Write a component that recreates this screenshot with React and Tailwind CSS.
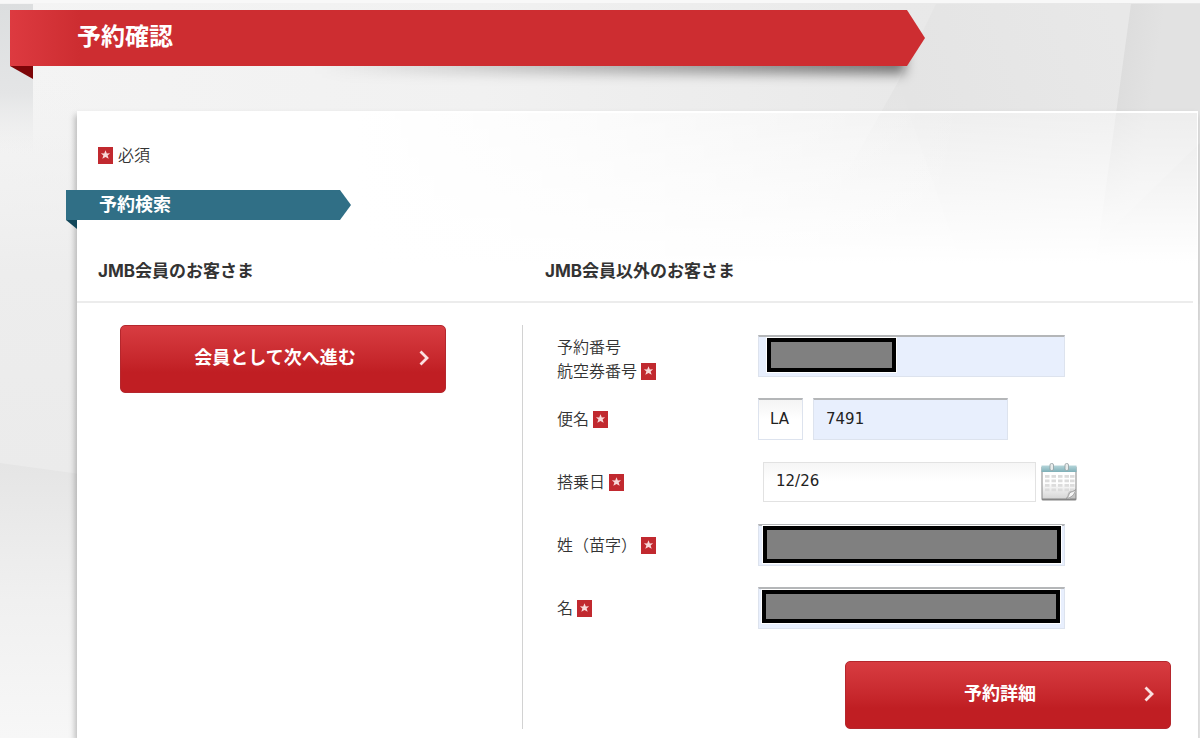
/**
 * App.jsx — Booking lookup page
 * Sections: Title ribbon, Search panel (member / non-member)
 */

const FONT = { fontFamily: "'Noto Sans','Noto Sans CJK JP',sans-serif" };

const INPUT =
  "block h-[42px] border border-[#dde3ee] border-t-2 border-t-[#b4b6b8] px-3 pb-[2px] font-['DejaVu_Sans',sans-serif] text-[15px] text-[#222] outline-none";

/* ── Small pieces ─────────────────────────────────────── */

function RequiredMark() {
  return (
    <svg role="img" aria-label="必須" viewBox="0 0 15 17" className="inline-block w-[15px] h-[17px] shrink-0">
      <rect width="15" height="17" fill="#c1292f" />
      <path
        d="M7.5 3.300l1.300 3.100 3.300-.1-2.500 2.200 1.100 3.200-3.200-1.700-3.200 1.700 1.100-3.200-2.500-2.200 3.300.1z"
        fill="#f8d9d9"
      />
    </svg>
  );
}

function RedButton({ children, type = 'button' }) {
  return (
    <button
      type={type}
      className="relative w-[326px] h-[68px] rounded-[5px] border border-[#b5272d] bg-linear-to-b from-[#d83c41] via-[#c92a2f] via-45% to-[#c01e23] to-70% text-white text-lg font-bold pr-4 pb-1 cursor-pointer"
    >
      {children}
      <svg viewBox="0 0 10 16" className="absolute right-4 top-6 w-[10px] h-4" fill="none" aria-hidden="true">
        <path d="M1.500 1.500L8 8l-6.500 6.500" stroke="#fbe0e0" strokeWidth="2.800" />
      </svg>
    </button>
  );
}

function Row({ id, label, top, children }) {
  return (
    <div className={`flex h-[42px] ${top ? 'items-start' : 'items-center'}`}>
      <label htmlFor={id} className="w-[201px] shrink-0 text-base leading-6 font-[350] text-[#333]">
        {label}
      </label>
      {children}
    </div>
  );
}

/* Field whose value is covered by a grey block */
function MaskedInput({ id, mask }) {
  return (
    <div className="relative w-[307px]">
      <input id={id} type="text" className={`${INPUT} w-full bg-[#e8effd]`} />
      <span className={`absolute bg-[#808080] border-4 border-black ring-1 ring-white ${mask}`} />
    </div>
  );
}

function CalendarIcon() {
  return (
    <svg viewBox="0 0 36 38" className="w-9 h-[38px]" aria-hidden="true">
      <defs>
        <linearGradient id="calTop" x1="0" y1="0" x2="0" y2="1">
          <stop offset="0" stopColor="#b5d5da" />
          <stop offset="1" stopColor="#7fb0b8" />
        </linearGradient>
        <linearGradient id="calPage" x1="0" y1="0" x2="0" y2="1">
          <stop offset="0.400" stopColor="#fff" />
          <stop offset="1" stopColor="#d6d6d6" />
        </linearGradient>
      </defs>
      <rect x="0.500" y="3" width="35" height="34.500" rx="1.500" fill="#858585" />
      <path d="M1.500 9h33v21l-6 5.500H1.500z" fill="url(#calPage)" />
      <rect x="0.500" y="2.500" width="35" height="6.500" fill="url(#calTop)" />
      {[12, 16.5, 21, 25.5].map(y =>
        [4, 10.5, 17, 23.5, 29].map(x => (
          <rect key={`${x}-${y}`} x={x} y={y} width="4.500" height="2.800" fill="#dcdcdc" />
        )),
      )}
      <path d="M25 35.500c2-2 1-5 3-7 2-1 4 0 6.500-2V35.500z" fill="#c4c4c4" />
      <path d="M25 35.500c3-1 2.500-4.500 4-6 1.500-.8 3.500-.5 5.500-3-.5 5-4.500 8.500-9.500 9z" fill="#f6f6f6" stroke="#8c8c8c" strokeWidth="0.700" />
      {[9, 24].map(x => (
        <rect key={x} x={x} y="0.500" width="3.500" height="7" rx="1.500" fill="#e9ecec" stroke="#8f9da0" strokeWidth="0.800" />
      ))}
    </svg>
  );
}

/* Folded grey paper behind the whole page */
function Backdrop() {
  return (
    <svg
      className="absolute inset-0 w-full h-full"
      viewBox="0 0 1200 738"
      preserveAspectRatio="xMinYMin slice"
      aria-hidden="true"
    >
      <defs>
        <linearGradient id="bgTop" x1="0" y1="0" x2="1" y2="0">
          <stop offset="0" stopColor="#f4f4f4" />
          <stop offset="0.400" stopColor="#f1f1f1" />
          <stop offset="0.750" stopColor="#e9e9e9" />
          <stop offset="1" stopColor="#e7e7e7" />
        </linearGradient>
        <linearGradient id="bgLeft" x1="0" y1="0" x2="0" y2="1">
          <stop offset="0" stopColor="#f1f1f1" stopOpacity="0" />
          <stop offset="0.500" stopColor="#ededed" />
          <stop offset="1" stopColor="#ebebeb" />
        </linearGradient>
        <linearGradient id="bgLow" x1="0" y1="0" x2="0" y2="1">
          <stop offset="0" stopColor="#e5e5e5" />
          <stop offset="0.500" stopColor="#f0f0f0" />
          <stop offset="1" stopColor="#f7f7f7" />
        </linearGradient>
        <linearGradient id="strip" x1="0" y1="0" x2="0" y2="1">
          <stop offset="0" stopColor="#dcdedf" />
          <stop offset="0.600" stopColor="#e4e5e6" />
          <stop offset="1" stopColor="#ededed" stopOpacity="0" />
        </linearGradient>
        <linearGradient id="foldShade" gradientUnits="userSpaceOnUse" x1="1110" y1="100" x2="1150" y2="106">
          <stop offset="0" stopColor="#dcdcdc" />
          <stop offset="1" stopColor="#e2e2e2" />
        </linearGradient>
        <linearGradient id="facet" x1="0" y1="0" x2="0" y2="1">
          <stop offset="0" stopColor="#dedede" />
          <stop offset="1" stopColor="#e8e8e8" stopOpacity="0" />
        </linearGradient>
        <linearGradient id="plane" gradientUnits="userSpaceOnUse" x1="900" y1="70" x2="1110" y2="0">
          <stop offset="0" stopColor="#e4e4e4" />
          <stop offset="1" stopColor="#e8e8e8" />
        </linearGradient>
      </defs>
      <rect width="1200" height="738" fill="url(#bgTop)" />
      <rect y="70" width="80" height="405" fill="url(#bgLeft)" />
      <path d="M0 463L80 474V738H0z" fill="url(#bgLow)" />
      <rect y="4" width="33" height="150" fill="url(#strip)" />
      <path d="M936 4L898 82 960 260H1100L1131 4z" fill="url(#plane)" />
      <path d="M898 82L840 185 800 260H960z" fill="url(#facet)" opacity="0.500" />
      <path d="M1131 4h69v300H1090z" fill="url(#foldShade)" />
      <path d="M1200 143L1100 240v80h100z" fill="#d8d8d8" opacity="0.500" />
      <rect width="1200" height="3" fill="#f8f8f8" />
    </svg>
  );
}

export default function App() {
  return (
    <div className="relative isolate min-h-screen overflow-hidden bg-[#f1f1f1] text-[#222]" style={FONT}>
      <Backdrop />

      <div className="relative flex min-h-screen flex-col">
        {/* ── TITLE RIBBON ─────────────────────────────── */}
        <header className="pt-[10px] pl-[10px] h-[111px] shrink-0">
          <div className="relative w-[915px] max-w-full">
            {/* Shadow is strongest under the pointed end */}
            <div className="absolute left-1/3 right-5 top-5 h-11 bg-linear-to-r from-transparent to-black/50 blur-[6px]" />
            <div className="relative flex h-14 items-center bg-linear-to-r from-[#dd3a40] to-[#cd2d31] to-[70px] pl-[67px] pb-1 [clip-path:polygon(0_0,calc(100%-18px)_0,100%_50%,calc(100%-18px)_100%,0_100%)]">
              <h1 className="text-2xl font-bold text-white">予約確認</h1>
            </div>
            <div className="w-[23px] h-[13px] bg-[#7d0508] [clip-path:polygon(0_0,100%_0,100%_100%)]" />
          </div>
        </header>

        {/* ── SEARCH PANEL ─────────────────────────────── */}
        <main className="relative grow ml-[77px] mr-[2px] shadow-[-2px_4px_6px_rgba(0,0,0,0.250)] border-t-2 border-r border-white">
          <div className="absolute inset-0 bg-linear-to-b from-white/40 to-white to-[150px]" />
          <div className="absolute inset-0 bg-linear-to-r from-white from-25% to-transparent to-80%" />

          <div className="relative">
            <p className="flex items-center gap-[5px] pl-[21px] pt-[30px] text-base leading-6 font-[350] text-[#333]">
              <RequiredMark />
              必須
            </p>

            <div className="-ml-[11px] mt-[23px] w-[285px]">
              <div className="flex h-[30px] items-center bg-[#306f86] pl-[33px] pb-[2px] [clip-path:polygon(0_0,calc(100%-11px)_0,100%_50%,calc(100%-11px)_100%,0_100%)]">
                <h2 className="text-lg leading-6 font-bold text-white">予約検索</h2>
              </div>
              <div className="w-[11px] h-[9px] bg-[#12475a] [clip-path:polygon(0_0,100%_0,100%_100%)]" />
            </div>

            <div
              className="mr-1 mt-[30px] grid grid-cols-[446px_1fr] border-b-2 border-[#ececec] pb-[18px] text-[17px] leading-6 font-bold text-[#333]"
              style={{ fontFamily: "Inter,'Noto Sans CJK JP',sans-serif" }}
            >
              <h3 className="pl-[21px]">JMB会員のお客さま</h3>
              <h3 className="pl-[22px]">JMB会員以外のお客さま</h3>
            </div>

            <div className="grid grid-cols-[446px_1fr] pt-[22px] pb-[9px]">
              {/* Members */}
              <section className="border-r border-[#d2d2d2] pl-[43px]">
                <RedButton>会員として次へ進む</RedButton>
              </section>

              {/* Non-members */}
              <form className="pt-[10px] pl-[34px] pr-[26px]" onSubmit={e => e.preventDefault()}>
                <div className="flex flex-col gap-[21px]">
                  <Row
                    id="booking"
                    top
                    label={
                      <>
                        予約番号
                        <br />
                        <span className="flex items-center gap-1">航空券番号<RequiredMark /></span>
                      </>
                    }
                  >
                    <MaskedInput id="booking" mask="left-[9px] top-[3px] w-[129px] h-[34px]" />
                  </Row>

                  <Row id="flight" label={<span className="flex items-center gap-1">便名<RequiredMark /></span>}>
                    <div className="flex gap-[10px]">
                      <input
                        type="text"
                        aria-label="航空会社"
                        defaultValue="LA"
                        className={`${INPUT} w-[45px] px-[11px] bg-linear-to-b from-[#f4f4f4] to-white to-50%`}
                      />
                      <input id="flight" type="text" defaultValue="7491" className={`${INPUT} w-[195px] bg-[#e8effd]`} />
                    </div>
                  </Row>

                  <Row id="date" label={<span className="flex items-center gap-1">搭乗日<RequiredMark /></span>}>
                    <div className="flex items-center gap-[5px] pl-[5px]">
                      <input
                        id="date"
                        type="text"
                        defaultValue="12/26"
                        className="h-10 w-[273px] border border-[#e2e2e2] bg-linear-to-b from-[#f6f6f6] to-white to-50% px-3 pb-[2px] font-['DejaVu_Sans',sans-serif] text-[15px] text-[#222] outline-none"
                      />
                      <button type="button" aria-label="カレンダー" className="cursor-pointer">
                        <CalendarIcon />
                      </button>
                    </div>
                  </Row>

                  <Row id="last" label={<span className="flex items-center gap-1">姓（苗字）<RequiredMark /></span>}>
                    <MaskedInput id="last" mask="left-[5px] top-[2px] w-[298px] h-[37px]" />
                  </Row>

                  <Row id="first" label={<span className="flex items-center gap-1">名<RequiredMark /></span>}>
                    <MaskedInput id="first" mask="left-[4px] top-[3px] w-[298px] h-[33px]" />
                  </Row>
                </div>

                <div className="mt-8 flex justify-end">
                  <RedButton type="submit">予約詳細</RedButton>
                </div>
              </form>
            </div>
          </div>
        </main>
      </div>
    </div>
  );
}
